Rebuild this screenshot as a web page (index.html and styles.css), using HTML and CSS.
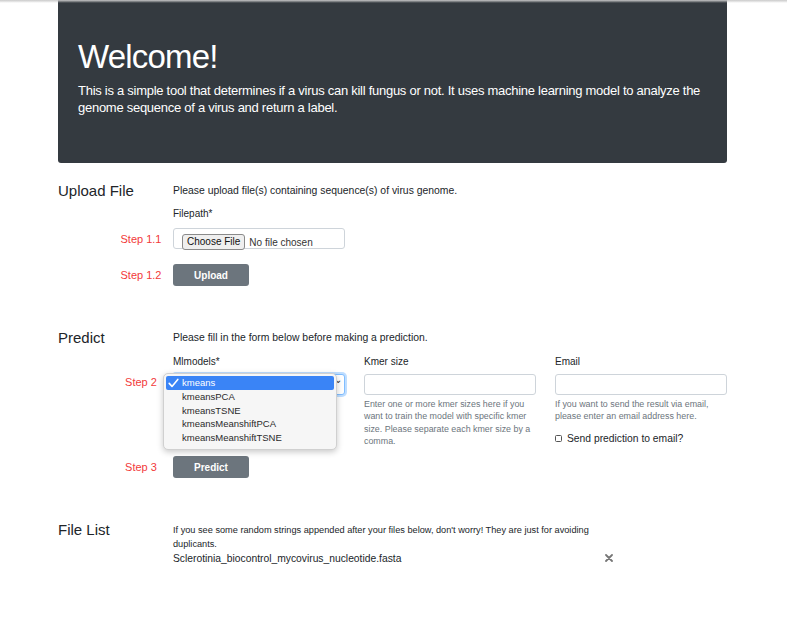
FILE: index.html
```html
<!DOCTYPE html>
<html lang="en">
<head>
<meta charset="utf-8">
<title>Virus Fungus Predictor</title>
<link rel="stylesheet" href="styles.css">
</head>
<body>
<div class="page">
  <header class="jumbo">
    <h1 class="jumbo-title">Welcome!</h1>
    <p class="jumbo-text">This is a simple tool that determines if a virus can kill fungus or not. It uses machine learning model to analyze the genome sequence of a virus and return a label.</p>
  </header>

  <section class="sect sect-upload">
    <h2 class="sect-title">Upload File</h2>
    <div class="sect-body">
      <p class="desc">Please upload file(s) containing sequence(s) of virus genome.</p>
      <label class="field-label label-file">Filepath*</label>
      <div class="step-row row-file">
        <span class="step">Step 1.1</span>
        <div class="file-box"><input class="file-input" type="file"></div>
      </div>
      <div class="step-row row-upload">
        <span class="step">Step 1.2</span>
        <button class="btn" type="button">Upload</button>
      </div>
    </div>
  </section>

  <section class="sect sect-predict">
    <h2 class="sect-title">Predict</h2>
    <div class="sect-body">
      <p class="desc">Please fill in the form below before making a prediction.</p>
      <div class="form-grid">
        <div class="col col-model">
          <label class="field-label">Mlmodels*</label>
          <div class="select-wrap">
            <span class="step step-abs">Step 2</span>
            <div class="select-box"><span class="select-arrow">&#x2304;</span></div>
            <ul class="menu">
              <li class="menu-item is-selected"><svg class="check" width="11" height="10" viewBox="0 0 11 10"><path d="M1.2 5.4 L4 8.4 L9.8 1.4" fill="none" stroke="#fff" stroke-width="1.6" stroke-linecap="round" stroke-linejoin="round"/></svg>kmeans</li>
              <li class="menu-item">kmeansPCA</li>
              <li class="menu-item">kmeansTSNE</li>
              <li class="menu-item">kmeansMeanshiftPCA</li>
              <li class="menu-item">kmeansMeanshiftTSNE</li>
            </ul>
          </div>
        </div>
        <div class="col col-kmer">
          <label class="field-label">Kmer size</label>
          <div class="text-input"></div>
          <p class="help">Enter one or more kmer sizes here if you want to train the model with specific kmer size. Please separate each kmer size by a comma.</p>
        </div>
        <div class="col col-email">
          <label class="field-label">Email</label>
          <div class="text-input"></div>
          <p class="help">If you want to send the result via email, please enter an email address here.</p>
          <div class="check-row"><span class="checkbox"></span><span class="check-label">Send prediction to email?</span></div>
        </div>
      </div>
      <div class="step-row row-predict">
        <span class="step">Step 3</span>
        <button class="btn" type="button">Predict</button>
      </div>
    </div>
  </section>

  <section class="sect sect-files">
    <h2 class="sect-title">File List</h2>
    <div class="sect-body files-body">
      <p class="files-desc">If you see some random strings appended after your files below, don't worry! They are just for avoiding duplicants.</p>
      <div class="file-item">
        <span class="file-name">Sclerotinia_biocontrol_mycovirus_nucleotide.fasta</span>
        <svg class="remove" width="8" height="8" viewBox="0 0 8 8"><path d="M1 1 L7 7 M7 1 L1 7" stroke="#777" stroke-width="1.8" stroke-linecap="round"/></svg>
      </div>
    </div>
  </section>
</div>
</body>
</html>
```

FILE: styles.css
```css
html, body {
  margin: 0;
  padding: 0;
  background: #fff;
}
body {
  font-family: "Liberation Sans", Arial, sans-serif;
  color: #212529;
}
html::after {
  content: "";
  position: fixed;
  left: 0;
  top: 0;
  right: 0;
  height: 3px;
  background: linear-gradient(#c9c9c9, rgba(255,255,255,0));
  pointer-events: none;
}
.page {
  width: 669px;
  margin-left: 58px;
  padding-bottom: 40px;
}
.jumbo {
  background: #343a40;
  border-radius: 0 0 3px 3px;
  height: 163px;
  box-sizing: border-box;
  padding: 37px 20px 0 20px;
  color: #fff;
}
.jumbo-title {
  margin: 0;
  font-size: 33px;
  font-weight: normal;
  line-height: 40px;
  letter-spacing: -0.8px;
}
.jumbo-text {
  margin: 5px 0 0 0;
  font-size: 13px;
  line-height: 17px;
  letter-spacing: -0.27px;
}
.sect {
  display: grid;
  grid-template-columns: 115px 554px;
}
.sect-upload { margin-top: 20px; }
.sect-predict { margin-top: 44px; }
.sect-files { margin-top: 44px; }
.sect-title {
  margin: 0;
  font-size: 15px;
  font-weight: normal;
  line-height: 16px;
}
.sect-body {
  display: flex;
  flex-direction: column;
  align-items: flex-start;
}
.desc {
  margin: 0;
  font-size: 10.4px;
  line-height: 16px;
  color: #212529;
}
.field-label {
  display: block;
  font-size: 10px;
  line-height: 14px;
  color: #212529;
}
.label-file { margin-top: 8px; }
.step-row {
  display: flex;
  align-items: center;
  margin-left: -60px;
}
.step {
  width: 56px;
  margin-right: 4px;
  text-align: center;
  color: #f23a3a;
  font-size: 11px;
}
.row-file { margin-top: 7px; }
.row-upload { margin-top: 15px; }
.file-box {
  width: 172px;
  height: 21px;
  box-sizing: border-box;
  border: 1px solid #ced4da;
  border-radius: 3px;
  padding: 2px 0 0 8px;
  background: #fff;
}
.file-input {
  font-family: "Liberation Sans", Arial, sans-serif;
  font-size: 10px;
  color: #333;
  width: 160px;
  height: 16px;
  margin: 0;
  padding: 0;
}
.file-input::file-selector-button {
  font-family: "Liberation Sans", Arial, sans-serif;
  font-size: 10px;
  height: 16px;
  padding: 0 4px;
  margin-right: 4px;
  border: 1px solid #8a8a8a;
  border-radius: 3px;
  background: #efefef;
  color: #111;
}
.btn {
  width: 76px;
  height: 22px;
  border: 0;
  border-radius: 3px;
  background: #6c757d;
  color: #fff;
  font-family: "Liberation Sans", Arial, sans-serif;
  font-weight: bold;
  font-size: 10px;
  padding: 0;
}
.form-grid {
  margin-top: 9px;
  display: grid;
  grid-template-columns: 172px 172px 172px;
  column-gap: 19px;
  width: 554px;
}
.select-wrap {
  position: relative;
  margin-top: 5px;
  height: 21px;
}
.step-abs {
  position: absolute;
  left: -60px;
  top: 1px;
  line-height: 14px;
}
.select-box {
  height: 21px;
  box-sizing: border-box;
  border: 1px solid #80bdff;
  border-radius: 3px;
  box-shadow: 0 0 0 2px rgba(0,123,255,.25);
  background: #fff;
  position: relative;
}
.select-arrow {
  position: absolute;
  right: 2px;
  top: -1px;
  font-size: 10px;
  color: #333;
}
.menu {
  position: absolute;
  left: -10px;
  top: -1px;
  width: 174px;
  box-sizing: border-box;
  margin: 0;
  padding: 2px 2px 4px 2px;
  list-style: none;
  background: #f6f6f6;
  border: 1px solid #d0d0d0;
  border-radius: 5px;
  box-shadow: 0 2px 6px rgba(0,0,0,.22);
}
.menu-item {
  position: relative;
  height: 13.8px;
  line-height: 13.8px;
  padding-left: 16px;
  font-size: 9.5px;
  color: #2a2a2a;
  border-radius: 2px;
}
.menu-item.is-selected {
  background: #3a84f6;
  color: #fff;
}
.check {
  position: absolute;
  left: 2px;
  top: 2px;
}
.text-input {
  margin-top: 5px;
  height: 21px;
  box-sizing: border-box;
  border: 1px solid #ced4da;
  border-radius: 3px;
  background: #fff;
}
.help {
  margin: 3px 0 0 0;
  font-size: 8.9px;
  line-height: 12.3px;
  color: #6c757d;
}
.check-row {
  display: flex;
  align-items: center;
  margin-top: 9px;
  height: 14px;
}
.checkbox {
  width: 7px;
  height: 7px;
  border: 1px solid #555;
  border-radius: 1.5px;
  box-sizing: border-box;
  margin-right: 5px;
}
.check-label {
  font-size: 10.3px;
  color: #212529;
}
.row-predict { margin-top: 9px; }
.files-body {
  width: 440px;
  align-items: stretch;
}
.files-desc {
  margin: 1px 0 0 0;
  font-size: 9.2px;
  line-height: 14px;
  color: #212529;
}
.file-item {
  display: flex;
  justify-content: space-between;
  align-items: center;
  height: 14px;
}
.file-name {
  font-size: 10.3px;
  color: #212529;
}
.remove {
  margin-right: 0;
}
```
